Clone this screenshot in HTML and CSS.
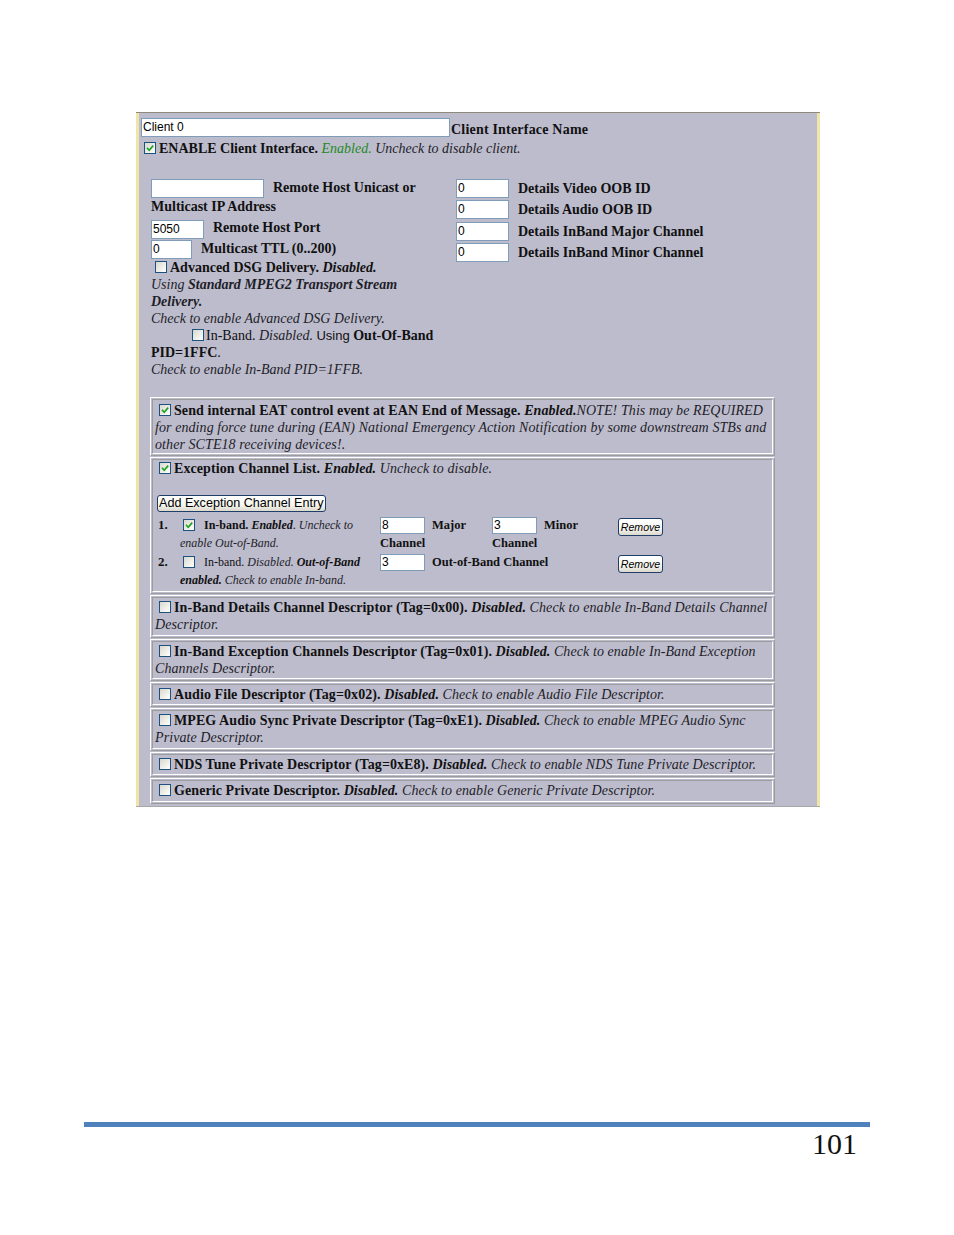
FILE: index.html
```html
<!DOCTYPE html>
<html>
<head>
<meta charset="utf-8">
<title>Client Interface</title>
<link rel="stylesheet" href="styles.css">
</head>
<body>
<div class="page">
  <div class="frame">
    <div class="panel">
      <div class="row-name"><span class="field w309">Client 0</span><b class="lbl-name">Client Interface Name</b></div>
      <div class="row-enable"><span class="cb on"><svg viewBox="0 0 10 10" width="10" height="10"><path d="M2 4.8 L4.2 7.2 L8.2 2.6" fill="none" stroke="#21a121" stroke-width="1.7"/></svg></span><b>ENABLE Client Interface.</b> <i class="green">Enabled.</i> <i class="note">Uncheck to disable client.</i></div>
      <div class="spacer"></div>
      <div class="cols">
        <div class="lcol">
          <div class="lline"><span class="field w113"></span><b>Remote Host Unicast or</b> <b>Multicast IP Address</b></div>
          <div class="lline l2"><span class="field w53">5050</span><b>Remote Host Port</b></div>
          <div class="lline l3"><span class="field w41">0</span><b>Multicast TTL (0..200)</b></div>
          <div class="txt">
            <span class="cb dsg"></span><b>Advanced DSG Delivery. <i>Disabled.</i></b><br>
            <i class="note">Using <b>Standard MPEG2 Transport Stream</b></i> <i class="note"><b>Delivery.</b></i><br>
            <i class="note">Check to enable Advanced DSG Delivery.</i><br>
            <span class="indent"></span><span class="cb inb"></span>In-Band. <i class="note">Disabled.</i> <span class="sans">Using</span> <b>Out-Of-Band</b> <b>PID=1FFC</b>.<br>
            <i class="note">Check to enable In-Band PID=1FFB.</i>
          </div>
        </div>
        <div class="rcol">
          <div class="rline"><span class="field w53">0</span><b>Details Video OOB ID</b></div>
          <div class="rline"><span class="field w53">0</span><b>Details Audio OOB ID</b></div>
          <div class="rline"><span class="field w53">0</span><b>Details InBand Major Channel</b></div>
          <div class="rline"><span class="field w53">0</span><b>Details InBand Minor Channel</b></div>
        </div>
      </div>

      <div class="boxes">
        <div class="box"><div class="cell c1"><span class="cb on"><svg viewBox="0 0 10 10" width="10" height="10"><path d="M2 4.8 L4.2 7.2 L8.2 2.6" fill="none" stroke="#21a121" stroke-width="1.7"/></svg></span><b>Send internal EAT control event at EAN End of Message. <i>Enabled.</i></b><i class="note">NOTE! This may be REQUIRED</i> <i class="note">for ending force tune during (EAN) National Emergency Action Notification by some downstream STBs and</i> <i class="note">other SCTE18 receiving devices!.</i></div></div>

        <div class="box"><div class="cell c2">
          <div><span class="cb on"><svg viewBox="0 0 10 10" width="10" height="10"><path d="M2 4.8 L4.2 7.2 L8.2 2.6" fill="none" stroke="#21a121" stroke-width="1.7"/></svg></span><b>Exception Channel List. <i>Enabled.</i></b> <i class="note">Uncheck to disable.</i></div>
          <div class="blank"></div>
          <div class="btnrow"><span class="btn">Add Exception Channel Entry</span></div>
          <div class="entries">
            <b class="num">1.</b>
            <div class="etext"><span class="cb on ecb"><svg viewBox="0 0 10 10" width="10" height="10"><path d="M2 4.8 L4.2 7.2 L8.2 2.6" fill="none" stroke="#21a121" stroke-width="1.7"/></svg></span><b>In-band. <i>Enabled</i></b>. <i class="note">Uncheck to</i> <i class="note">enable Out-of-Band.</i></div>
            <div class="ech"><span class="field efield">8</span><b>Major</b> <b>Channel</b></div>
            <div class="ech"><span class="field efield">3</span><b>Minor</b> <b>Channel</b></div>
            <div class="erm"><span class="btn rm">Remove</span></div>

            <b class="num">2.</b>
            <div class="etext"><span class="cb ecb"></span>In-band. <i class="note">Disabled.</i> <b><i>Out-of-Band</i></b> <b><i>enabled.</i></b> <i class="note">Check to enable In-band.</i></div>
            <div class="ech span2"><span class="field efield">3</span><b>Out-of-Band Channel</b></div>
            <div class="erm"><span class="btn rm">Remove</span></div>
          </div>
        </div></div>

        <div class="box"><div class="cell"><span class="cb"></span><b>In-Band Details Channel Descriptor (Tag=0x00). <i>Disabled.</i></b> <i class="note">Check to enable In-Band Details Channel</i> <i class="note">Descriptor.</i></div></div>
        <div class="box"><div class="cell"><span class="cb"></span><b>In-Band Exception Channels Descriptor (Tag=0x01). <i>Disabled.</i></b> <i class="note">Check to enable In-Band Exception</i> <i class="note">Channels Descriptor.</i></div></div>
        <div class="box"><div class="cell"><span class="cb"></span><b>Audio File Descriptor (Tag=0x02). <i>Disabled.</i></b> <i class="note">Check to enable Audio File Descriptor.</i></div></div>
        <div class="box"><div class="cell"><span class="cb"></span><b>MPEG Audio Sync Private Descriptor (Tag=0xE1). <i>Disabled.</i></b> <i class="note">Check to enable MPEG Audio Sync</i> <i class="note">Private Descriptor.</i></div></div>
        <div class="box"><div class="cell"><span class="cb"></span><b>NDS Tune Private Descriptor (Tag=0xE8). <i>Disabled.</i></b> <i class="note">Check to enable NDS Tune Private Descriptor.</i></div></div>
        <div class="box"><div class="cell"><span class="cb"></span><b>Generic Private Descriptor. <i>Disabled.</i></b> <i class="note">Check to enable Generic Private Descriptor.</i></div></div>
      </div>
    </div>
  </div>

  <div class="footer">
    <div class="bar"></div>
    <div class="pno">101</div>
  </div>
</div>
</body>
</html>
```

FILE: styles.css
```css
html, body {
  margin: 0;
  padding: 0;
  background: #ffffff;
}

body {
  font-family: "Liberation Serif", "Times New Roman", serif;
  color: #111111;
}

.page {
  width: 954px;
  height: 1235px;
  box-sizing: border-box;
  padding-top: 112px;
  display: flex;
  flex-direction: column;
}

.frame {
  margin-left: 136px;
  width: 684px;
  border-top: 1px solid #8e8a7c;
  border-bottom: 1px solid #a8a8a8;
}

.panel {
  background: #bdbccd;
  border-left: 3px solid #f1e4a8;
  border-right: 3px solid #f1e4a8;
  padding: 5px 0 1px 2px;
  font-size: 14px;
  line-height: 17px;
}

b { font-weight: bold; }
i { font-style: italic; }

.note { color: #1e1e28; }
.green { color: #1f8a1f; }
.sans { font-family: "Liberation Sans", Arial, sans-serif; font-size: 13px; }

/* text fields */
.field {
  display: inline-block;
  box-sizing: border-box;
  height: 19px;
  border: 1px solid #7f9db9;
  background: #ffffff;
  font-family: "Liberation Sans", Arial, sans-serif;
  font-size: 12px;
  line-height: 17px;
  padding: 0 1px;
  color: #000;
  vertical-align: middle;
  margin-right: 9px;
  font-weight: normal;
  letter-spacing: 0;
}
.w309 { width: 309px; margin-right: 1px; }
.w113 { width: 113px; }
.w53 { width: 53px; }
.w41 { width: 41px; }

/* checkbox */
.cb {
  display: inline-block;
  box-sizing: border-box;
  width: 12px;
  height: 12px;
  border: 1px solid #1c5180;
  background: linear-gradient(135deg, #d8d8d0 0%, #f4f4f0 70%, #ffffff 100%);
  vertical-align: -1px;
  margin: 0 3px 0 4px;
}
.cb svg { display: block; }

.row-name {
  display: flex;
  align-items: center;
  height: 19px;
}
.lbl-name { margin-top: 4px; letter-spacing: 0.2px; }

.row-enable {
  margin-top: 3px;
}
.row-enable .cb { margin-left: 3px; }

.spacer { height: 22px; }

.cols {
  display: flex;
  margin-left: 10px;
}

.lcol { width: 292px; }
.rcol { margin-left: 13px; }

.lline .field { margin-right: 9px; }
.l2 { margin-top: 4px; }
.l3 { margin-top: 1px; }

.txt { margin-top: 0; }
.txt .dsg { margin: 0 3px 0 4px; }
.indent { display: inline-block; width: 37px; }
.txt .inb { margin: 0 2px 0 4px; }

.rline {
  display: flex;
  align-items: center;
  height: 19px;
  margin-bottom: 2.4px;
}

/* boxes */
.boxes {
  margin: 19px 0 0 9px;
  width: 625px;
}

.box {
  border: 1px solid;
  border-color: #ffffff #9c9c9c #9c9c9c #ffffff;
  padding: 1px;
  margin-bottom: 1px;
}

.cell {
  border: 1px solid;
  border-color: #9c9c9c #ffffff #ffffff #9c9c9c;
  padding: 1px 2px 1.4px;
  line-height: 17px;
  letter-spacing: 0.08px;
}
.c1 { padding: 2px 2px 0; }
.c2 { padding: 0 2px 1.4px; }

.blank { height: 17px; }

.btnrow {
  height: 19px;
  display: flex;
  align-items: center;
}

.btn {
  display: inline-block;
  box-sizing: border-box;
  border: 1px solid #1f3f6a;
  border-radius: 3px;
  background: linear-gradient(#ffffff 0%, #f5f5f0 60%, #dcd8cc 100%);
  font-family: "Liberation Sans", Arial, sans-serif;
  font-size: 12.6px;
  line-height: 15px;
  height: 17px;
  padding: 0 1px;
  margin-left: 2px;
  color: #000;
  white-space: nowrap;
  letter-spacing: 0;
}

.entries {
  display: grid;
  grid-template-columns: 22px 200px 112px 126px auto;
  row-gap: 1px;
  margin: 3px 0 1px 3px;
  font-size: 12px;
  line-height: 18px;
  align-items: start;
  letter-spacing: 0;
}

.num { font-size: 13px; }

.etext .ecb { margin: 0 9px 0 3px; vertical-align: -2px; }

.ech .efield {
  width: 45px;
  height: 17px;
  line-height: 15px;
  margin-right: 7px;
  vertical-align: top;
  margin-top: 1px;
}
.ech b { font-size: 12.5px; }
.span2 { grid-column: span 2; }

.erm { padding-top: 2px; }
.rm {
  margin-left: 0;
  font-style: italic;
  font-size: 10.6px;
  width: 45px;
  height: 18px;
  line-height: 16px;
  text-align: center;
  padding: 0;
}

/* footer */
.footer {
  margin-top: auto;
  margin-bottom: 76px;
  margin-left: 84px;
  width: 786px;
}

.bar {
  height: 5px;
  background: #4f81bd;
}

.pno {
  margin-top: 2px;
  text-align: right;
  padding-right: 13px;
  font-family: "Liberation Serif", "Times New Roman", serif;
  font-size: 30px;
  line-height: 30px;
  color: #111;
}
```
